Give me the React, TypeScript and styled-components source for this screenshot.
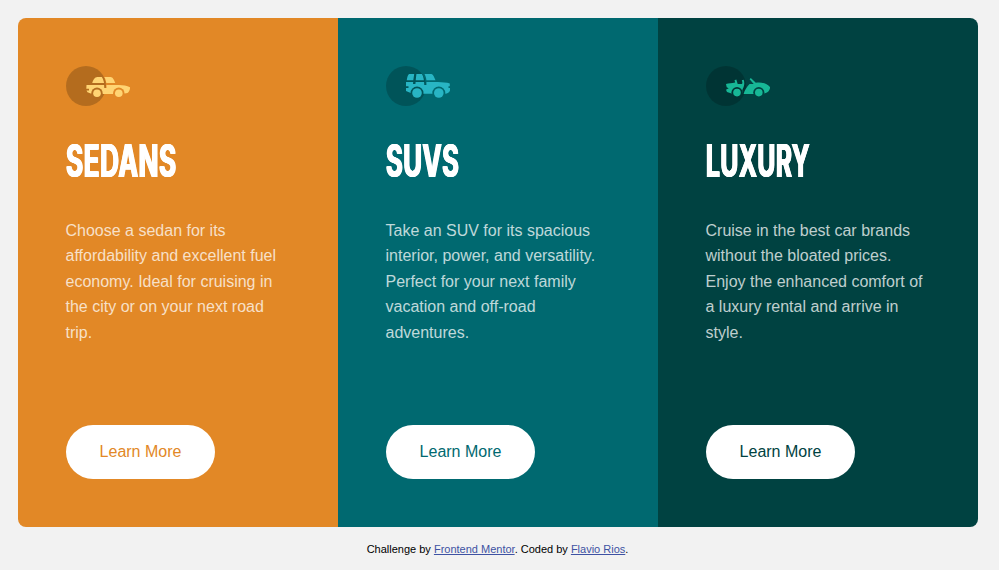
import React, { useId } from 'react';
import styled, { createGlobalStyle } from 'styled-components';

const GlobalStyle = createGlobalStyle`
  *, *::before, *::after { box-sizing: border-box; }
  html { height: 100%; overflow: hidden; background: #f2f2f2; }
  body { margin: 0; font-family: "Liberation Sans", Arial, sans-serif; }
`;

const Page = styled.div`
  width: 999px;
  height: 570px;
  padding: 18px 21px 0 18px;
  background: #f2f2f2;
`;

const Cards = styled.main`
  display: grid;
  grid-template-columns: repeat(3, 320px);
  height: 509px;
  border-radius: 8px;
  overflow: hidden;
`;

const Card = styled.section<{ $color: string }>`
  display: flex;
  flex-direction: column;
  align-items: flex-start;
  padding: 48px;
  background: ${(p) => p.$color};
`;

const Icon = styled.svg`
  display: block;
  width: 64px;
  height: 40px;
  flex: none;
`;

const Title = styled.h1<{ $stretch: number }>`
  margin: 31px 0 0;
  height: 48px;
  color: #fff;
  font: 700 45px/48px Inter, "Liberation Sans", sans-serif;
  letter-spacing: 0.9px;
  text-transform: uppercase;
  white-space: nowrap;
  text-shadow: 1.2px 0 #fff, -1.2px 0 #fff, 0.6px 0 #fff, -0.6px 0 #fff;
  transform: scaleX(${(p) => p.$stretch});
  transform-origin: left center;
`;

const Text = styled.p`
  margin: 32.6px 0 0 -0.5px;
  height: 128px;
  width: 224px;
  color: rgba(255, 255, 255, 0.75);
  font-size: 16px;
  line-height: 25.6px;
`;

const Button = styled.button<{ $color: string }>`
  margin-top: auto;
  width: 149px;
  height: 54px;
  padding: 0;
  border: 0;
  border-radius: 27px;
  background: #fff;
  color: ${(p) => p.$color};
  font: 16px "Liberation Sans", Arial, sans-serif;
`;

const Footer = styled.footer`
  margin-top: 16px;
  padding-right: 1px;
  font-size: 11px;
  line-height: 13px;
  text-align: center;
`;

const Link = styled.a`
  color: #3e52a3;
  text-decoration: underline;
`;

type Kind = 'sedan' | 'suv' | 'luxury';

const shapes: Record<Kind, { fill: string; body: string; wheel: number; arch: number; cy: number }> = {
  sedan: {
    fill: '#ffd473',
    wheel: 3.8,
    arch: 5.7,
    cy: 27.3,
    body: 'M26.2 17C27.2 14 28.7 11 31.5 11H35.8C36.9 12.5 37.7 15 38.1 17Z M38.3 11H44.5C46.8 11 48.1 14 49.3 17H40.3C40 15 39.5 12.8 38.3 11Z M20.5 19H38.1L38.3 22H40.5L40.4 19H53C57 19.4 61 19.5 64 21.3C64.2 23.5 63 26 61.5 27L56 28H26L21.5 26.2L20.5 24.4H23V22.8H20.3Z',
  },
  suv: {
    fill: '#28b5c4',
    wheel: 4.8,
    arch: 6.5,
    cy: 27,
    body: 'M20.8 14.2C21.2 12 21.8 8 23.4 8H28.2L27.3 14.2Z M30.4 8H35.8C37 9.2 37.6 12 37.9 14.2H29.7Z M38.5 8H45.5C47.3 8.4 48.3 11.5 49.5 14.2H40.4C40.2 12 39.5 9.8 38.5 8Z M20 16H27.2L27 18H29.4L29.6 16H38.1L38.3 19H40.5L40.4 16H52C56 16.5 61 16.3 63.8 17.6V20.2H62.5V22H64V24.5C63.5 26.4 61.5 27.8 59 27.8H26.5L20 25V22H22.5V20.2H20Z',
  },
  luxury: {
    fill: '#17b796',
    wheel: 3.8,
    arch: 5.6,
    cy: 26.6,
    body: 'M20 18.1C22.5 17.2 26 17.3 29.2 16.6L28.5 14.2L30.3 13.5L31.7 18.1H35.7C37 17.2 36.2 15.5 35.8 14.2L37.7 13.7C38.8 17 38.3 20 36.6 23.2C35.8 25 37 26 35.8 28H27L21 26L20 23.7L22.7 22.3L20.7 21.2Z M43.6 13.2L44.8 12L49.8 16.7C56 15.9 61.5 17.4 64.2 21.2C63.8 24 62.5 26.2 59.8 27.1L56 28H37.6C38.8 24 41 20.5 43.6 18H47.7Z',
  },
};

function CarIcon({ kind }: { kind: Kind }) {
  const id = useId();
  const { fill, body, wheel, arch, cy } = shapes[kind];
  return (
    <Icon viewBox="0 0 64 40" aria-hidden="true">
      <mask id={id} maskUnits="userSpaceOnUse" x="0" y="0" width="65" height="40">
        <rect width="65" height="40" fill="#fff" />
        <circle cx="31" cy={cy} r={arch} />
        <circle cx="52.8" cy={cy} r={arch} />
      </mask>
      <circle cx="20" cy="20" r="20" opacity=".2" />
      <g fill={fill}>
        <path d={body} mask={`url(#${id})`} />
        <circle cx="31" cy={cy} r={wheel} />
        <circle cx="52.8" cy={cy} r={wheel} />
      </g>
    </Icon>
  );
}

const cars: { kind: Kind; title: string; color: string; stretch: number; text: string }[] = [
  {
    kind: 'sedan',
    title: 'Sedans',
    color: '#e28826',
    stretch: 0.582,
    text: 'Choose a sedan for its affordability and excellent fuel economy. Ideal for cruising in the city or on your next road trip.',
  },
  {
    kind: 'suv',
    title: 'SUVs',
    color: '#006970',
    stretch: 0.568,
    text: 'Take an SUV for its spacious interior, power, and versatility. Perfect for your next family vacation and off-road adventures.',
  },
  {
    kind: 'luxury',
    title: 'Luxury',
    color: '#004241',
    stretch: 0.545,
    text: 'Cruise in the best car brands without the bloated prices. Enjoy the enhanced comfort of a luxury rental and arrive in style.',
  },
];

export default function App() {
  return (
    <>
      <GlobalStyle />
      <Page>
        <Cards>
          {cars.map((car) => (
            <Card key={car.kind} $color={car.color}>
              <CarIcon kind={car.kind} />
              <Title $stretch={car.stretch}>{car.title}</Title>
              <Text>{car.text}</Text>
              <Button $color={car.color}>Learn More</Button>
            </Card>
          ))}
        </Cards>
        <Footer>
          Challenge by <Link href="#">Frontend Mentor</Link>. Coded by <Link href="#">Flavio Rios</Link>.
        </Footer>
      </Page>
    </>
  );
}
